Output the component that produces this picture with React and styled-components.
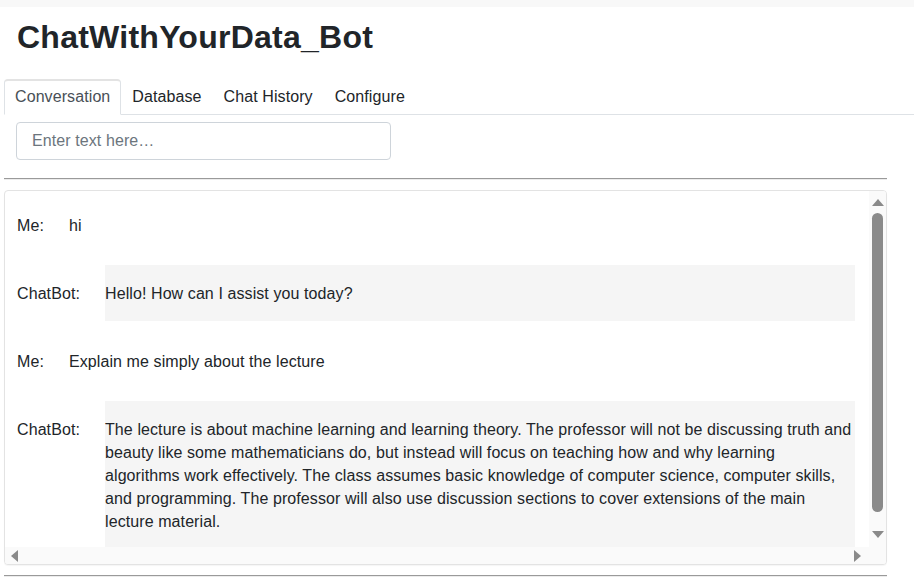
import React from "react";
import styled, { createGlobalStyle } from "styled-components";

const GlobalStyle = createGlobalStyle`
  html, body {
    margin: 0;
    padding: 0;
    background: #ffffff;
    overflow: hidden;
  }
  body {
    font-family: "Liberation Sans", Arial, sans-serif;
    font-size: 16px;
    letter-spacing: 0.09px;
    color: #212529;
  }
  * {
    box-sizing: border-box;
  }
`;

const BAR = "#8a8a8a";
const TRACK = "#fafafa";

// Page frame
const TopStrip = styled.div`
  height: 7px;
  background: #f8f8f8;
`;

const Page = styled.div`
  padding-left: 4px;
`;

const Title = styled.h1`
  margin: 11px 0 0 13px;
  font-size: 32px;
  font-weight: 700;
  line-height: 38px;
  letter-spacing: 0.25px;
  color: #212529;
`;

// Tabs
const TabBar = styled.nav`
  display: flex;
  margin-top: 23px;
  border-bottom: 1px solid #dee2e6;
`;

const Tab = styled.div`
  padding: 8px 10px;
  line-height: 18px;
  margin-bottom: -1px;
  border: 1px solid transparent;
  border-radius: 4px 4px 0 0;
  color: ${(p) => (p.active ? "#495057" : "#212529")};
  background: ${(p) => (p.active ? "#ffffff" : "transparent")};
  border-color: ${(p) => (p.active ? "#e3e3e3 #dee2e6 #ffffff" : "transparent")};
  border-top-width: ${(p) => (p.active ? "2px" : "1px")};
  padding-top: ${(p) => (p.active ? "7px" : "8px")};
  cursor: pointer;
`;

// Conversation pane
const Content = styled.section`
  margin-right: 27px;
`;

const TextInput = styled.input`
  display: block;
  margin: 7px 0 0 12px;
  width: 375px;
  height: 38px;
  padding: 0 15px;
  border: 1px solid #ced4da;
  border-radius: 4px;
  font-family: inherit;
  font-size: 16px;
  letter-spacing: inherit;
  color: #212529;
  outline: none;

  &::placeholder {
    color: #6c757d;
  }
`;

const Divider = styled.hr`
  margin: ${(p) => p.top}px 0 0;
  height: 2px;
  border: 0;
  border-top: 1px solid #9a9a9a;
  border-bottom: 1px solid #ececec;
`;

const ChatBox = styled.div`
  display: grid;
  grid-template-columns: 1fr 17px;
  grid-template-rows: 1fr 17px;
  margin-top: 10px;
  height: 375px;
  border: 1px solid #e3e3e3;
  border-radius: 4px;
  box-shadow: 0 1px 1px rgba(0, 0, 0, 0.04);
  background: #ffffff;
  overflow: hidden;
`;

const Viewport = styled.div`
  overflow: hidden;
  min-width: 0;
`;

const Thread = styled.div`
  display: flex;
  flex-direction: column;
  gap: 12px;
  padding: 6px 14px 30px 12px;
`;

const Row = styled.div`
  display: flex;
  align-items: flex-start;
  gap: 25px;
`;

const Speaker = styled.div`
  padding: 16.5px 0;
  line-height: 23px;
  white-space: nowrap;
`;

const Message = styled.div`
  flex: 1;
  padding: 16.5px 2px 16.5px 0;
  line-height: 23px;
  background: ${(p) => (p.bot ? "#f5f5f5" : "transparent")};
`;

// Scrollbars
const VScroll = styled.div`
  display: flex;
  flex-direction: column;
  background: ${TRACK};
`;

const HScroll = styled.div`
  display: flex;
  align-items: center;
  justify-content: space-between;
  background: ${TRACK};
  padding: 0 8px 0 6px;
`;

const Corner = styled.div`
  background: ${TRACK};
`;

const ArrowCell = styled.div`
  display: flex;
  align-items: center;
  justify-content: center;
  height: ${(p) => p.h}px;
  flex: none;
`;

const Arrow = styled.span`
  width: 0;
  height: 0;
  border-style: solid;
  border-color: transparent;
  ${(p) =>
    p.dir === "up" &&
    `border-width: 0 6px 7px 6px; border-bottom-color: ${BAR};`}
  ${(p) =>
    p.dir === "down" &&
    `border-width: 7px 6px 0 6px; border-top-color: ${BAR};`}
  ${(p) =>
    p.dir === "left" &&
    `border-width: 6px 7px 6px 0; border-right-color: ${BAR};`}
  ${(p) =>
    p.dir === "right" &&
    `border-width: 6px 0 6px 7px; border-left-color: ${BAR};`}
`;

const Track = styled.div`
  flex: 1;
  padding: 0 3px;
`;

const Thumb = styled.div`
  height: 299px;
  border-radius: 6px;
  background: ${BAR};
`;

const tabs = ["Conversation", "Database", "Chat History", "Configure"];

const messages = [
  { who: "Me", text: "hi" },
  { who: "ChatBot", text: "Hello! How can I assist you today?" },
  { who: "Me", text: "Explain me simply about the lecture" },
  {
    who: "ChatBot",
    text:
      "The lecture is about machine learning and learning theory. The professor will not be discussing truth and beauty like some mathematicians do, but instead will focus on teaching how and why learning algorithms work effectively. The class assumes basic knowledge of computer science, computer skills, and programming. The professor will also use discussion sections to cover extensions of the main lecture material.",
  },
];

const App = () => {
  return (
    <>
      <GlobalStyle />
      <TopStrip />
      <Page>
        <Title>ChatWithYourData_Bot</Title>
        <TabBar>
          {tabs.map((t, i) => (
            <Tab key={t} active={i === 0}>
              {t}
            </Tab>
          ))}
        </TabBar>
        <Content>
          <TextInput placeholder="Enter text here…" />
          <Divider top={18} />
          <ChatBox>
            <Viewport>
              <Thread>
                {messages.map((m, i) => (
                  <Row key={i}>
                    <Speaker>{m.who}:</Speaker>
                    <Message bot={m.who === "ChatBot"}>{m.text}</Message>
                  </Row>
                ))}
              </Thread>
            </Viewport>
            <VScroll>
              <ArrowCell h={22}>
                <Arrow dir="up" />
              </ArrowCell>
              <Track>
                <Thumb />
              </Track>
              <ArrowCell h={26}>
                <Arrow dir="down" />
              </ArrowCell>
            </VScroll>
            <HScroll>
              <Arrow dir="left" />
              <Arrow dir="right" />
            </HScroll>
            <Corner />
          </ChatBox>
          <Divider top={10} />
        </Content>
      </Page>
    </>
  );
};

export default App;
